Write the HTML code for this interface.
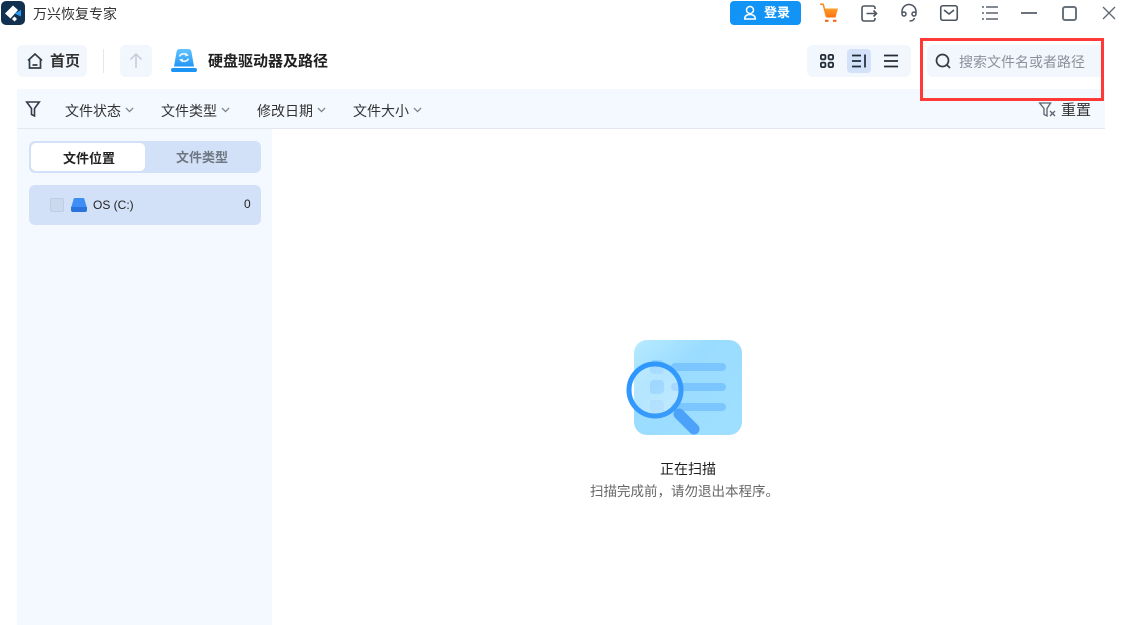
<!DOCTYPE html>
<html lang="zh"><head><meta charset="utf-8"><title>万兴恢复专家</title>
<style>
html,body{margin:0;padding:0;background:#fff}
#p{position:relative;width:1125px;height:625px;overflow:hidden;background:#fff;font-family:"Liberation Sans","Noto Sans CJK SC",sans-serif;color:#1f2733}
#p>*{position:absolute}
.t{white-space:nowrap;line-height:20px;height:20px}
svg{display:block;overflow:visible}
</style></head><body><div id="p">

<svg style="left:1px;top:1px" width="24" height="24" viewBox="0 0 24 24"><rect width="24" height="24" rx="5" fill="#12304f"/><path d="M4 12.500 12 4.500l5 4.500-7.500 8.500z" fill="#fff"/><path d="M11 18l2.500-2.500 2.500 2.500-2.500 2.500z" fill="#fff"/><path d="M13.500 12.500 20 9v6.500z" fill="#2d9cf0"/></svg>
<div class="t" style="left:33px;top:4px;font-size:14px;color:#333">万兴恢复专家</div>

<div style="left:730px;top:1px;width:71px;height:24px;background:#1294f6;border-radius:4px"></div>
<svg style="left:742px;top:5px" width="16" height="16" viewBox="0 0 16 16" fill="none" stroke="#fff" stroke-width="1.500"><circle cx="8" cy="5" r="3.500"/><path d="M2.700 14c0-3 2-4.500 5.300-4.500s5.300 1.500 5.300 4.500z"/></svg>
<div class="t" style="left:764px;top:3px;font-size:13px;font-weight:bold;color:#fff">登录</div>

<svg style="left:819px;top:3px" width="20" height="19" viewBox="0 0 20 19"><defs><linearGradient id="c" x1="0" y1="0" x2="0" y2="1"><stop offset="0" stop-color="#ffa02a"/><stop offset="1" stop-color="#fb6f12"/></linearGradient></defs><path d="M5.500 5.500h13.500l-2.500 9H7.500z" fill="url(#c)"/><path d="M1 1.200h3.200l3.300 13" fill="none" stroke="#fb8a1e" stroke-width="1.500"/><rect x="6" y="16.800" width="3.500" height="2" fill="#f4620f"/><rect x="14" y="16.800" width="3.500" height="2" fill="#f4620f"/></svg>
<svg style="left:861px;top:5px" width="17" height="17" viewBox="0 0 17 17" fill="none" stroke="#4c5560" stroke-width="1.600"><path d="M14 4V3a2 2 0 0 0-2-2H3a2 2 0 0 0-2 2v11a2 2 0 0 0 2 2h9a2 2 0 0 0 2-2v-1"/><path d="M5.500 8.500h10M12.500 5.500l3 3-3 3"/></svg>
<svg style="left:901px;top:4px" width="16" height="18" viewBox="0 0 16 18" fill="none" stroke="#4c5560" stroke-width="1.500"><path d="M1 9V7.500a7 7 0 0 1 14 0V9"/><circle cx="3" cy="10" r="2"/><circle cx="13" cy="10" r="2"/><path d="M13.500 14c-.5 2-2.500 3-5 3"/></svg>
<svg style="left:940px;top:5px" width="18" height="16" viewBox="0 0 18 16" fill="none" stroke="#4c5560" stroke-width="1.600"><rect x=".75" y=".75" width="16.500" height="14.500" rx="2"/><path d="M4 5l5 4 5-4"/></svg>
<svg style="left:981px;top:5px" width="17" height="16" viewBox="0 0 17 16" fill="none" stroke="#5a626d" stroke-width="1.500"><path d="M5 2h12M5 8h12M5 14h12M1 2h2M1 8h2M1 14h2"/></svg>
<div style="left:1021px;top:12px;width:16px;height:2px;background:#6a727c"></div>
<div style="left:1062px;top:6px;width:11px;height:11px;border:2px solid #6a727c;border-radius:3px"></div>
<svg style="left:1102px;top:6px" width="14" height="14" viewBox="0 0 14 14" fill="none" stroke="#5f6771" stroke-width="1.300"><path d="M1 1l12 12M13 1L1 13"/></svg>

<div style="left:17px;top:45px;width:70px;height:32px;background:#f2f7fe;border-radius:6px"></div>
<svg style="left:27px;top:53px" width="16" height="16" viewBox="0 0 16 16" fill="none" stroke="#333b46" stroke-width="1.700"><path d="M1 7.500 8 1l7 6.500M2.500 6.500V15h11V6.500M5.500 12h5"/></svg>
<div class="t" style="left:50px;top:52px;font-size:15px;font-weight:bold;color:#333">首页</div>
<div style="left:103px;top:49px;width:1px;height:24px;background:#e3e8ef"></div>
<div style="left:120px;top:45px;width:32px;height:32px;background:#f2f7fe;border-radius:6px"></div>
<svg style="left:129px;top:53px" width="14" height="16" viewBox="0 0 14 16" fill="none" stroke="#c2ccd8" stroke-width="1.500"><path d="M7 15V1M1.500 6.500 7 1l5.500 5.500"/></svg>
<svg style="left:171px;top:49px" width="26" height="23" viewBox="0 0 26 23"><defs><linearGradient id="d" x1="0" y1="0" x2="0" y2="1"><stop offset="0" stop-color="#62c4fc"/><stop offset="1" stop-color="#2296f8"/></linearGradient></defs><path d="M5.500 3a3 3 0 0 1 3-3h9a3 3 0 0 1 3 3l2.500 14.500H3z" fill="url(#d)"/><rect y="19" width="26" height="4" rx="2" fill="#1a94f5"/><path d="M8.500 7.500a4.500 4 0 0 1 7.500-1.500M17.500 9.500a4.500 4 0 0 1-7.500 1.500" fill="none" stroke="#e4f4ff" stroke-width="1.700"/><path d="M14.500 3.500l3.500 3-4 1zM11.500 13.500l-3.500-3 4-1z" fill="#e4f4ff"/></svg>
<div class="t" style="left:208px;top:52px;font-size:15px;font-weight:bold;color:#1f1f1f">硬盘驱动器及路径</div>

<div style="left:807px;top:45px;width:104px;height:32px;background:#f2f7fe;border-radius:6px"></div>
<svg style="left:820px;top:54px" width="14" height="14" viewBox="0 0 14 14" fill="none" stroke="#222b36" stroke-width="1.800"><rect x=".9" y=".9" width="4.500" height="4.500" rx="1.200"/><rect x="8.600" y=".9" width="4.500" height="4.500" rx="1.200"/><rect x=".9" y="8.600" width="4.500" height="4.500" rx="1.200"/><rect x="8.600" y="8.600" width="4.500" height="4.500" rx="1.200"/></svg>
<div style="left:847px;top:49px;width:24px;height:24px;background:#d3e2f9;border-radius:4px"></div>
<svg style="left:852px;top:54px" width="14" height="14" viewBox="0 0 14 14" stroke="#222b36" stroke-width="1.700" fill="none"><path d="M0 1.500h9M0 7h9M0 12.500h9M13 .5v13"/></svg>
<svg style="left:884px;top:54px" width="14" height="14" viewBox="0 0 14 14" stroke="#222b36" stroke-width="1.700" fill="none"><path d="M0 1.500h14M0 7h14M0 12.500h14"/></svg>

<div style="left:927px;top:45px;width:174px;height:32px;background:#f2f7fe;border-radius:6px 0 0 6px"></div>
<svg style="left:935px;top:53px" width="16" height="16" viewBox="0 0 16 16" fill="none" stroke="#333c47" stroke-width="1.700"><circle cx="7.500" cy="7.500" r="6"/><path d="M12 12l3 3"/></svg>
<div class="t" style="left:959px;top:52px;font-size:14px;color:#8a919b">搜索文件名或者路径</div>

<div style="left:17px;top:89px;width:1088px;height:39px;background:#f4f8ff;border-bottom:1px solid #e3e8ef"></div>
<svg style="left:26px;top:101px" width="14" height="16" viewBox="0 0 14 16" fill="none" stroke="#333c47" stroke-width="1.600"><path d="M.7 1h12.600L8.500 7.500V15l-3-1.500v-6z"/></svg>
<div class="t" style="left:65px;top:101px;font-size:14px;color:#333">文件状态</div>
<div class="t" style="left:161px;top:101px;font-size:14px;color:#333">文件类型</div>
<div class="t" style="left:257px;top:101px;font-size:14px;color:#333">修改日期</div>
<div class="t" style="left:353px;top:101px;font-size:14px;color:#333">文件大小</div>
<svg style="left:124.500px;top:107px" width="9" height="5.500" viewBox="0 0 10 6" fill="none" stroke="#7d8590" stroke-width="1.500"><path d="M1 1l4 4 4-4"/></svg>
<svg style="left:220.500px;top:107px" width="9" height="5.500" viewBox="0 0 10 6" fill="none" stroke="#7d8590" stroke-width="1.500"><path d="M1 1l4 4 4-4"/></svg>
<svg style="left:316.500px;top:107px" width="9" height="5.500" viewBox="0 0 10 6" fill="none" stroke="#7d8590" stroke-width="1.500"><path d="M1 1l4 4 4-4"/></svg>
<svg style="left:412.500px;top:107px" width="9" height="5.500" viewBox="0 0 10 6" fill="none" stroke="#7d8590" stroke-width="1.500"><path d="M1 1l4 4 4-4"/></svg>
<svg style="left:1039px;top:102px" width="17" height="15" viewBox="0 0 17 15" fill="none" stroke="#5a626d" stroke-width="1.300"><path d="M.6 1h11L8 6.500V14l-3-1.500v-6zM11 9l5 5M16 9l-5 5"/></svg>
<div class="t" style="left:1061px;top:101px;font-size:15px;color:#333">重置</div>

<div style="left:17px;top:129px;width:255px;height:496px;background:#f4f8ff"></div>
<div style="left:29px;top:141px;width:232px;height:32px;background:#d3e1f8;border-radius:6px"></div>
<div style="left:31px;top:143px;width:114px;height:28px;background:#fff;border-radius:5px"></div>
<div class="t" style="left:63px;top:149px;font-size:13px;font-weight:bold;color:#222">文件位置</div>
<div class="t" style="left:176px;top:148px;font-size:13px;font-weight:bold;color:#6f7782">文件类型</div>
<div style="left:29px;top:185px;width:232px;height:40px;background:#d3e1f8;border-radius:6px"></div>
<div style="left:50px;top:198px;width:12px;height:12px;background:#cbd9ee;border:1px solid #bdcde6;border-radius:2px"></div>
<svg style="left:71px;top:198px" width="16" height="14" viewBox="0 0 16 14"><path d="M2.500 1.500A1.500 1.500 0 0 1 4 0h8a1.500 1.500 0 0 1 1.500 1.500L16 10H0z" fill="#3d8ff5"/><path d="M0 9h16v3a2 2 0 0 1-2 2H2a2 2 0 0 1-2-2z" fill="#2a73dc"/></svg>
<div class="t" style="left:93px;top:195px;font-size:12px;color:#222">OS (C:)</div>
<div class="t" style="left:244px;top:194px;font-size:12px;color:#222">0</div>

<svg style="left:627px;top:339px" width="116" height="98" viewBox="0 0 116 98">
<defs><linearGradient id="a" x1="0" y1="0" x2="1" y2="1"><stop offset="0" stop-color="#b8ebff"/><stop offset=".35" stop-color="#9adcff"/><stop offset="1" stop-color="#9fdfff"/></linearGradient>
<linearGradient id="g" x1="0" y1="0" x2="1" y2="1"><stop offset="0" stop-color="#fff" stop-opacity=".15"/><stop offset="1" stop-color="#fff" stop-opacity=".4"/></linearGradient>
<linearGradient id="r" x1="0" y1="0" x2="1" y2="1"><stop offset="0" stop-color="#2c96ff"/><stop offset="1" stop-color="#3a9cfa"/></linearGradient></defs>
<rect x="7" y="1" width="108" height="95" rx="13" fill="url(#a)"/>
<rect x="44" y="24" width="55" height="8" rx="4" fill="#7cc6ff"/><rect x="44" y="44" width="55" height="8" rx="4" fill="#7cc6ff"/><rect x="44" y="64" width="55" height="8" rx="4" fill="#7cc6ff"/>
<rect x="23" y="21" width="14" height="14" rx="4" fill="#8fd2ff"/><rect x="23" y="41" width="14" height="14" rx="4" fill="#7ec9ff"/><rect x="23" y="61" width="14" height="14" rx="4" fill="#8fd2ff"/>
<circle cx="28" cy="51" r="26" fill="url(#g)"/>
<circle cx="28" cy="51" r="26" fill="none" stroke="url(#r)" stroke-width="5"/>
<path d="M52 75l15 15" stroke="#4ba2f8" stroke-width="11" stroke-linecap="round"/>
</svg>
<div class="t" style="left:660px;top:459px;font-size:14px;color:#1f1f1f">正在扫描</div>
<div class="t" style="left:590px;top:482px;font-size:13.500px;color:#666">扫描完成前，请勿退出本程序。</div>

<div style="left:920px;top:38px;width:178px;height:57px;border:3px solid #ff3838"></div>
</div></body></html>
